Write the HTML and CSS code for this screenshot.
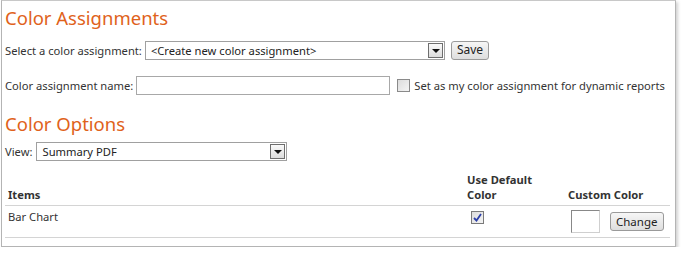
FILE: index.html
```html
<!DOCTYPE HTML>
<html lang=en>
  <head>
    <title>Color Assignments</title>
    <meta name=viewport content=width=device-width,initial-scale=1>
    <link rel="stylesheet" href="styles.css">
  </head>
  <body>
    <div class=frame>
      <h1>Color Assignments</h1>

      <div class="row first">
        <label class=lbl>Select a color assignment:</label>
        <div class="select wide">
          <span>&lt;Create new color assignment&gt;</span>
          <span class=arrow></span>
        </div>
        <button class="btn save">Save</button>
      </div>

      <div class="row second">
        <label class=lbl>Color assignment name:</label>
        <div class=textbox></div>
        <span class="check off"></span>
        <span class=lbl>Set as my color assignment for dynamic reports</span>
      </div>

      <h1 class=options>Color Options</h1>

      <div class="row view">
        <label class=lbl>View:</label>
        <div class="select narrow">
          <span>Summary PDF</span>
          <span class=arrow></span>
        </div>
      </div>

      <table class=items>
        <tr>
          <th class=name>Items</th>
          <th class=dflt>Use Default<br>Color</th>
          <th class=custom>Custom Color</th>
        </tr>
        <tr>
          <td>Bar Chart</td>
          <td><span class="check on">
            <svg width=9 height=9 viewBox="0 0 9 9"><path d="M1 5 L3.5 7.5 L8 1" fill=none stroke="#2c3fa8" stroke-width=1.8></path></svg>
          </span></td>
          <td>
            <div class=customcell>
              <span class=swatch></span>
              <button class="btn change">Change</button>
            </div>
          </td>
        </tr>
      </table>
    </div>
  </body>
</html>
```

FILE: styles.css
```css
html, body {
  margin: 0;
  background: #fff;
}
body {
  font-family: "Noto Sans", "Open Sans", sans-serif;
  font-size: 11.2px;
  color: #333;
}
.frame {
  margin-left: 1px;
  width: 675px;
  height: 247px;
  border: 1px solid #b4b4b4;
  border-top-color: #c8c8c8;
  box-shadow: 2px 2px 3px rgba(0,0,0,.18);
  padding: 0 0 0 3px;
  box-sizing: border-box;
}
h1 {
  font-weight: normal;
  font-size: 18.5px;
  color: #e0621b;
  margin: 4px 0 0 0;
  line-height: 26px;
}
.row {
  display: flex;
  align-items: center;
  height: 20px;
}
.row.first { margin-top: 9px; }
.row.second { margin-top: 15px; }
.row.view { margin-top: 4px; }
.options { margin-top: 16px; }
.lbl {
  white-space: nowrap;
}
.select {
  height: 19px;
  box-sizing: border-box;
  border: 1px solid #a0a0a0;
  display: flex;
  align-items: center;
  justify-content: space-between;
  padding-left: 5px;
  margin-left: 3px;
  color: #222;
}
.select.wide { width: 300px; }
.select.narrow { width: 251px; margin-left: 4px; }
.arrow {
  width: 15px;
  height: 15px;
  margin-right: 1px;
  box-sizing: border-box;
  border: 1px solid #6e6e6e;
  background: linear-gradient(#fafafa, #dcdcdc);
  position: relative;
}
.arrow::after {
  content: "";
  position: absolute;
  left: 3px;
  top: 5px;
  border-left: 4px solid transparent;
  border-right: 4px solid transparent;
  border-top: 4px solid #111;
}
.btn {
  font-family: inherit;
  font-size: 12px;
  color: #222;
  border: 1px solid #9a9a9a;
  border-radius: 3px;
  background: linear-gradient(#f6f6f6, #dedede);
  padding: 0 5px;
  height: 19px;
  line-height: 16px;
}
.save { margin-left: 6px; }
.textbox {
  width: 254px;
  height: 19px;
  box-sizing: border-box;
  border: 1px solid #a8a8a8;
  margin-left: 3px;
}
.check {
  display: inline-flex;
  align-items: center;
  justify-content: center;
  width: 13px;
  height: 13px;
  box-sizing: border-box;
  border: 1px solid #8a8a8a;
  background: linear-gradient(135deg, #dcdcdc, #f4f4f4);
}
.row .check { margin: 0 4px 0 7px; }
.items {
  border-collapse: collapse;
  width: 665px;
  margin-top: 11px;
}
.items th {
  font-weight: bold;
  text-align: left;
  vertical-align: bottom;
  color: #333;
  padding: 0 0 3px 0;
  border-bottom: 1px solid #d4d4d4;
  line-height: 15px;
}
.items th.name { padding-left: 3px; }
.items th.dflt { width: 101px; }
.items th.custom { width: 102px; }
.items td {
  vertical-align: top;
  padding: 3px 0 4px 0;
  border-bottom: 1px solid #d4d4d4;
  height: 24px;
}
.items td:first-child { padding-left: 3px; }
.items td .check.on {
  margin: 2px 0 0 4px;
  border-color: #7a7a7a;
}
.customcell {
  display: flex;
  align-items: center;
  padding-top: 1px;
}
.swatch {
  width: 29px;
  height: 23px;
  box-sizing: border-box;
  border: 1px solid #cfcfcf;
  border-left-color: #888;
  border-top-color: #888;
  margin-left: 3px;
}
.change {
  margin-left: 10px;
  padding: 0 5px;
  font-size: 11.5px;
}
```
